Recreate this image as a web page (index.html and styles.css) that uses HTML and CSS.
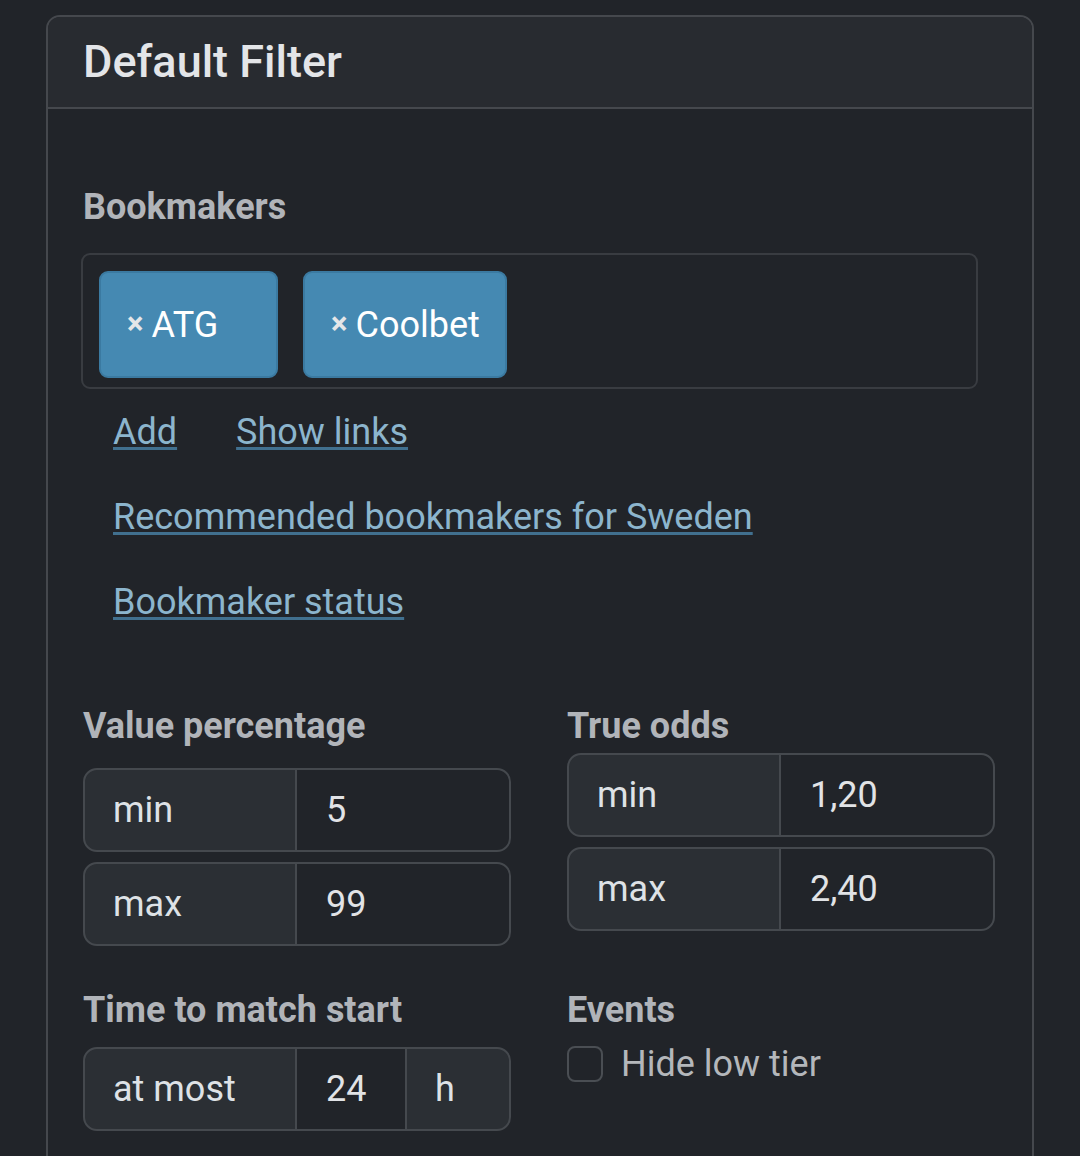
FILE: index.html
```html
<!DOCTYPE html>
<html lang="en">
<head>
<meta charset="utf-8">
<title>Default Filter</title>
<link rel="stylesheet" href="styles.css">
</head>
<body>
<div class="card">
  <div class="card-header"><h5 class="card-title">Default Filter</h5></div>
  <div class="card-body">
    <div class="field-label bm-label">Bookmakers</div>
    <div class="tag-box">
      <span class="tag tag-wide"><span class="tag-x">×</span>ATG</span>
      <span class="tag"><span class="tag-x">×</span>Coolbet</span>
    </div>
    <div class="links">
      <div class="link-row"><a href="#" class="link">Add</a><a href="#" class="link">Show links</a></div>
      <div class="link-row"><a href="#" class="link">Recommended bookmakers for Sweden</a></div>
      <div class="link-row"><a href="#" class="link">Bookmaker status</a></div>
    </div>

    <div class="filters">
      <div class="col">
        <div class="field-label">Value percentage</div>
        <div class="groups groups-vp">
          <div class="input-group"><span class="ig-text">min</span><span class="ig-input">5</span></div>
          <div class="input-group"><span class="ig-text">max</span><span class="ig-input">99</span></div>
        </div>
      </div>
      <div class="col">
        <div class="field-label">True odds</div>
        <div class="groups">
          <div class="input-group"><span class="ig-text">min</span><span class="ig-input">1,20</span></div>
          <div class="input-group"><span class="ig-text">max</span><span class="ig-input">2,40</span></div>
        </div>
      </div>
      <div class="col col-row2">
        <div class="field-label">Time to match start</div>
        <div class="groups groups-time">
          <div class="input-group"><span class="ig-text">at most</span><span class="ig-input ig-short">24</span><span class="ig-text ig-unit">h</span></div>
        </div>
      </div>
      <div class="col col-row2">
        <div class="field-label">Events</div>
        <label class="form-check"><span class="check-box"></span><span class="check-label">Hide low tier</span></label>
      </div>
    </div>
  </div>
</div>
</body>
</html>
```

FILE: styles.css
```css
* { box-sizing: border-box; }
html, body { margin: 0; padding: 0; }
body {
  background: #212429;
  color: #dee2e6;
  font-family: Roboto, "Noto Sans", "Liberation Sans", sans-serif;
  font-size: 36px;
  line-height: 1.5;
  padding: 15px 46px 0 46px;
  height: 1156px;
  overflow: hidden;
}
.card {
  border: 2px solid #45484d;
  border-radius: 14px;
  background: #212429;
  min-height: 1300px;
}
.card-header {
  background: #282b30;
  border-bottom: 2px solid #45484d;
  border-radius: 12px 12px 0 0;
  padding: 18px 36px 18px 35px;
}
.card-title {
  margin: 0;
  font-size: 45px;
  font-weight: 500;
  line-height: 1.2;
  color: #e3e5e8;
}
.card-body {
  padding: 71px 37px 36px 35px;
}
.field-label {
  font-weight: 700;
  color: #b1b4b9;
}
.tag-box {
  margin: 19px 0 0 -2px;
  width: 897px;
  border: 2px solid #393c41;
  border-radius: 9px;
  padding: 16px 16px 9px 16px;
  display: flex;
  gap: 25px;
}
.tag {
  display: inline-flex;
  align-items: center;
  height: 107px;
  padding: 0 25px 0 26px;
  background: #4589b2;
  border: 2px solid #3b7aa1;
  border-radius: 9px;
  color: #ffffff;
  line-height: 1;
}
.tag-wide { min-width: 179px; }
.tag-x {
  font-weight: 700;
  color: #e4e6e8;
  font-size: 31px;
  margin-right: 8px;
  position: relative;
  top: -1px;
}
.links {
  margin-top: 16px;
  padding-left: 30px;
}
.link-row {
  display: flex;
  gap: 59px;
  margin-bottom: 31px;
}
.link-row:last-child { margin-bottom: 0; }
.link {
  color: #8cb5cd;
  text-decoration: underline;
  text-decoration-color: #41708f;
  text-decoration-thickness: 3px;
  text-underline-offset: 3px;
}
.filters {
  margin-top: 70px;
  display: grid;
  grid-template-columns: 428px 428px;
  column-gap: 56px;
}
.groups {
  display: flex;
  flex-direction: column;
  gap: 10px;
}
.groups-vp { margin-top: 15px; }
.groups-time { margin-top: 10px; }
.col-row2 { margin-top: 37px; }
.input-group {
  display: flex;
  height: 84px;
}
.ig-text, .ig-input {
  display: flex;
  align-items: center;
  border: 2px solid #45494e;
  padding: 0 27px;
}
.ig-text {
  width: 214px;
  background: #2b2f34;
  border-radius: 14px 0 0 14px;
  color: #dee2e6;
  padding-left: 28px;
}
.ig-input {
  flex: 1;
  margin-left: -2px;
  background: #212429;
  border-radius: 0 14px 14px 0;
  color: #e1e3e6;
  padding-left: 29px;
}
.ig-short {
  flex: 0 0 112px;
  border-radius: 0;
}
.ig-unit {
  flex: 1;
  width: auto;
  margin-left: -2px;
  border-radius: 0 14px 14px 0;
}
.form-check {
  display: flex;
  align-items: flex-start;
}
.check-box {
  width: 36px;
  height: 36px;
  margin-top: 9px;
  border: 2px solid #4a4e53;
  border-radius: 8px;
  background: #212429;
  flex: 0 0 36px;
}
.check-label {
  margin-left: 18px;
  color: #b4b7bb;
}
```
